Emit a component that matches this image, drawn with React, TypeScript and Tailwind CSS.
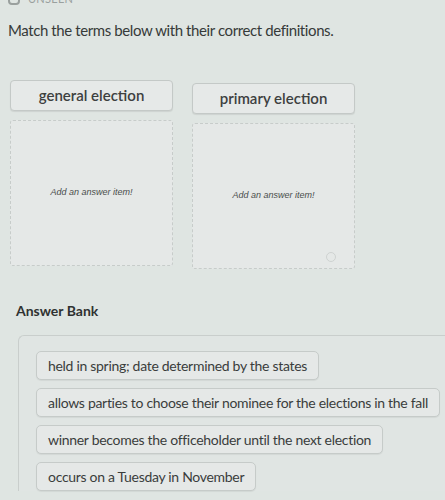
const terms = ["general election", "primary election"];

const answers = [
  "held in spring; date determined by the states",
  "allows parties to choose their nominee for the elections in the fall",
  "winner becomes the officeholder until the next election",
  "occurs on a Tuesday in November",
];

export default function App() {
  return (
    <main
      className="h-[500px] w-[445px] overflow-hidden bg-[#dfe5e2] text-[#3a3d3c]"
      style={{ fontFamily: 'Lato, "Open Sans", sans-serif' }}
    >
      {/* cut-off header */}
      <div className="-mt-[9px] flex items-center gap-2 px-[8px]">
        <span className="h-[12px] w-[12px] rounded-sm border-2 border-[#9aa09e]" />
        <span className="text-[11px] tracking-wide text-[#9aa09e]">UNSEEN</span>
      </div>

      <p className="mt-[12px] px-[8px] text-[15px] leading-[20px] tracking-[-0.4px] text-[#363a39]">
        Match the terms below with their correct definitions.
      </p>

      {/* term columns */}
      <div className="mt-[40px] flex gap-[19px] px-[10px]">
        {terms.map((t, i) => (
          <div key={t} className={`flex w-[163px] flex-col gap-[9px] ${i === 1 ? "mt-[3px]" : ""}`}>
            <div className="flex h-[31px] items-center justify-center rounded-[4px] border border-[#c4c9c7] bg-[#e6e9e8] text-[15px] font-semibold text-[#3d403f] shadow-[0_1px_1px_rgba(0,0,0,0.08)]">
              {t}
            </div>
            <div className="relative flex h-[146px] items-center justify-center rounded-[3px] border border-dashed border-[#c7ccca] bg-[#e5e8e7]">
              <span
                className="text-[9px] italic text-[#4a4d4c]"
                style={{ fontFamily: '"Liberation Sans", Arial, sans-serif' }}
              >
                Add an answer item!
              </span>
              {i === 1 && (
                <span className="absolute bottom-[6px] right-[18px] h-[10px] w-[10px] rounded-full border border-[#c4c9c7] opacity-70" />
              )}
            </div>
          </div>
        ))}
      </div>

      <h2 className="mt-[31px] px-[16px] text-[14px] font-bold text-[#2f3231]">Answer Bank</h2>

      <div className="ml-[18px] mt-[14px] flex flex-col items-start gap-[8px] rounded-tl-[6px] border-l border-t border-[#c9cecc] bg-[#e0e5e3] pl-[17px] pt-[15px]">
        {answers.map((a) => (
          <div
            key={a}
            className="whitespace-nowrap rounded-[5px] border border-[#c6cbc9] bg-[#e5e8e7] px-[11px] py-[4px] text-[14px] leading-[19px] tracking-[-0.3px] text-[#3a3d3c] shadow-[0_1px_1px_rgba(0,0,0,0.06)]"
          >
            {a}
          </div>
        ))}
      </div>
    </main>
  );
}
